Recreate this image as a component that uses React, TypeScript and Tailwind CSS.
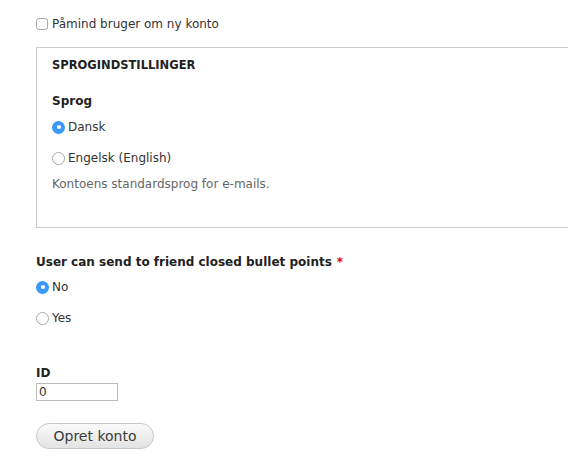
import React from "react";

function Radio({ checked, label }: { checked?: boolean; label: string }) {
  return (
    <label className="flex h-[16px] items-center gap-[3px]">
      {checked ? (
        <span className="flex h-[13px] w-[13px] items-center justify-center rounded-full bg-[#3b99fc]">
          <span className="h-[4px] w-[4px] rounded-full bg-white" />
        </span>
      ) : (
        <span className="h-[13px] w-[13px] rounded-full border border-[#a6a6a6] bg-white" />
      )}
      <span>{label}</span>
    </label>
  );
}

export default function App() {
  return (
    <div
      className="min-h-[471px] overflow-hidden bg-white pl-[36px] pt-[16px] text-[12px] text-[#333]"
      style={{ fontFamily: '"DejaVu Sans", Verdana, sans-serif' }}
    >
      <label className="flex h-[16px] items-center gap-[4px]">
        <span className="h-[12px] w-[12px] rounded-[3px] border border-[#a6a6a6] bg-white" />
        <span>Påmind bruger om ny konto</span>
      </label>

      <div className="mt-[15px] border-b border-l border-t border-[#cccccc] px-[15px] pb-[35px] pt-[10px]">
        <div className="flex h-[16px] items-center text-[11.5px] font-bold text-[#222]">SPROGINDSTILLINGER</div>
        <div className="mt-[19px] flex h-[16px] items-center font-bold text-[#222]">Sprog</div>
        <div className="mt-[10px]">
          <Radio checked label="Dansk" />
        </div>
        <div className="mt-[15px]">
          <Radio label="Engelsk (English)" />
        </div>
        <div className="mt-[10px] flex h-[16px] items-center text-[#666]">Kontoens standardsprog for e-mails.</div>
      </div>

      <div className="mt-[26px] flex h-[16px] items-center font-bold text-[#222]">
        <span>User can send to friend closed bullet points</span>
        <span className="ml-[5px] text-[#e00]">*</span>
      </div>
      <div className="mt-[9px]">
        <Radio checked label="No" />
      </div>
      <div className="mt-[15px]">
        <Radio label="Yes" />
      </div>

      <div className="mt-[39px] flex h-[16px] items-center font-bold text-[#222]">ID</div>
      <input
        defaultValue="0"
        className="mt-[2px] block h-[18px] w-[82px] border border-[#bbbbbb] px-[2px] text-[12px] text-[#333] outline-none"
        style={{ fontFamily: '"DejaVu Sans", Verdana, sans-serif' }}
      />

      <button className="mt-[22px] flex h-[26px] w-[118px] items-center justify-center rounded-full border border-[#c8c8c8] bg-gradient-to-b from-[#fafafa] to-[#e3e3e3] text-[14px] text-[#3a3a3a]">
        Opret konto
      </button>
    </div>
  );
}
